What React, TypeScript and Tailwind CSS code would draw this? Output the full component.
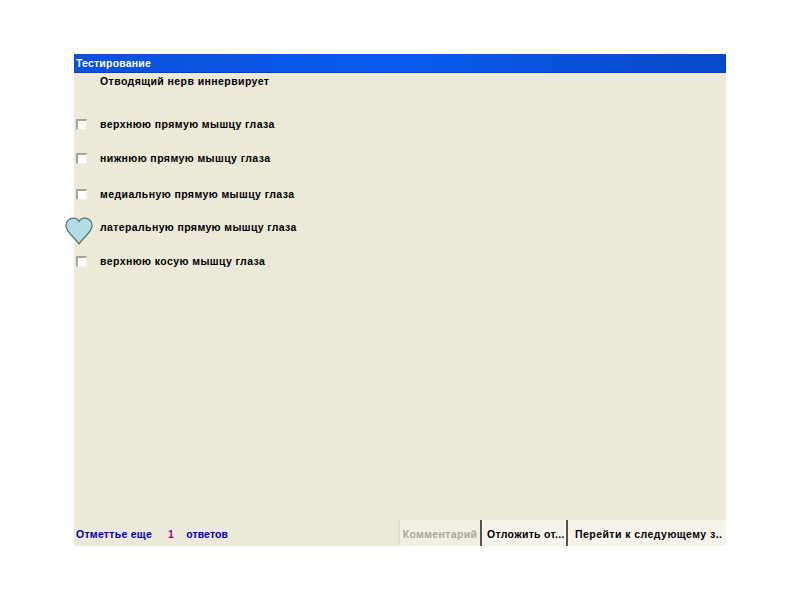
const font = "[font-family:'Liberation_Sans',Arial,sans-serif]"

function Check() {
  return (
    <span className="block w-[11px] h-[11px] bg-white border-t-2 border-l-2 border-t-[#a9a697] border-l-[#a9a697] border-r border-b border-r-[#f4f2e8] border-b-[#f4f2e8]" />
  )
}

function Row({ label, className }: { label: string; className: string }) {
  return (
    <div className={`flex items-center h-[14px] ${className}`}>
      <div className="w-[26px] pl-[2px] pb-[1px]">
        <Check />
      </div>
      <span className="tracking-[0.42px]">{label}</span>
    </div>
  )
}

export default function App() {
  return (
    <div className={`min-h-screen bg-white pt-[54px] pl-[74px] ${font}`}>
      <div className="relative w-[652px] h-[492px] flex flex-col bg-[#ece9d8] text-[10.5px] font-bold text-black">
        <div className="h-[19px] flex items-center pl-[2px] pt-[1px] bg-gradient-to-r from-[#0a50dc] via-[#0a5cee] to-[#0648c8] border-b border-b-[#0a3fa8] text-white tracking-[0.2px]">
          Тестирование
        </div>

        <div className="flex-1 flex flex-col">
          <div className="pl-[26px] h-[14px] mt-[2px] flex items-center tracking-[0.42px]">Отводящий нерв иннервирует</div>
          <Row label="верхнюю прямую мышцу глаза" className="mt-[29px]" />
          <Row label="нижнюю прямую мышцу глаза" className="mt-[20px]" />
          <Row label="медиальную прямую мышцу глаза" className="mt-[22px]" />
          <div className="flex items-center h-[14px] mt-[19px] pl-[26px] tracking-[0.38px]">латеральную прямую мышцу глаза</div>
          <Row label="верхнюю косую мышцу глаза" className="mt-[20px]" />
        </div>

        <div className="flex items-stretch h-[26px]">
          <div className="flex-1 flex items-center pl-[2px] pt-[4px] text-[#0000a8] tracking-[0.27px]">
            <span>Отметтье еще</span>
            <span className="ml-[16px] text-[#8a0a80]">1</span>
            <span className="ml-[12px] tracking-[0.1px]">ответов</span>
          </div>
          <div className="w-[83px] flex items-center justify-center pt-[4px] bg-[#f1efe3] border-l border-l-[#e0ddcc] border-r-2 border-r-[#55524a] text-[#aca899] tracking-[0.35px]">
            Комментарий
          </div>
          <div className="w-[86px] flex items-center pl-[5px] pt-[4px] bg-[#f6f4ea] border-r-2 border-r-[#55524a] tracking-[0.3px] whitespace-nowrap">
            Отложить от...
          </div>
          <div className="w-[158px] flex items-center pl-[7px] pt-[4px] bg-[#f6f4ea] tracking-[0.45px] whitespace-nowrap">
            Перейти к следующему з..
          </div>
        </div>

        <svg className="absolute left-[-9px] top-[163px]" width="28" height="28" viewBox="0 0 28 28">
          <path
            d="M14 27 C10 20.5 1 15.5 1 8.5 C1 3.8 4.8 1.2 8.5 1.2 C11 1.2 13 2.6 14 4.5 C15 2.6 17 1.2 19.5 1.2 C23.2 1.2 27 3.8 27 8.5 C27 15.5 18 20.5 14 27 Z"
            fill="#b2dde4"
            stroke="#5b7478"
            strokeWidth="1.3"
          />
        </svg>
      </div>
    </div>
  )
}
